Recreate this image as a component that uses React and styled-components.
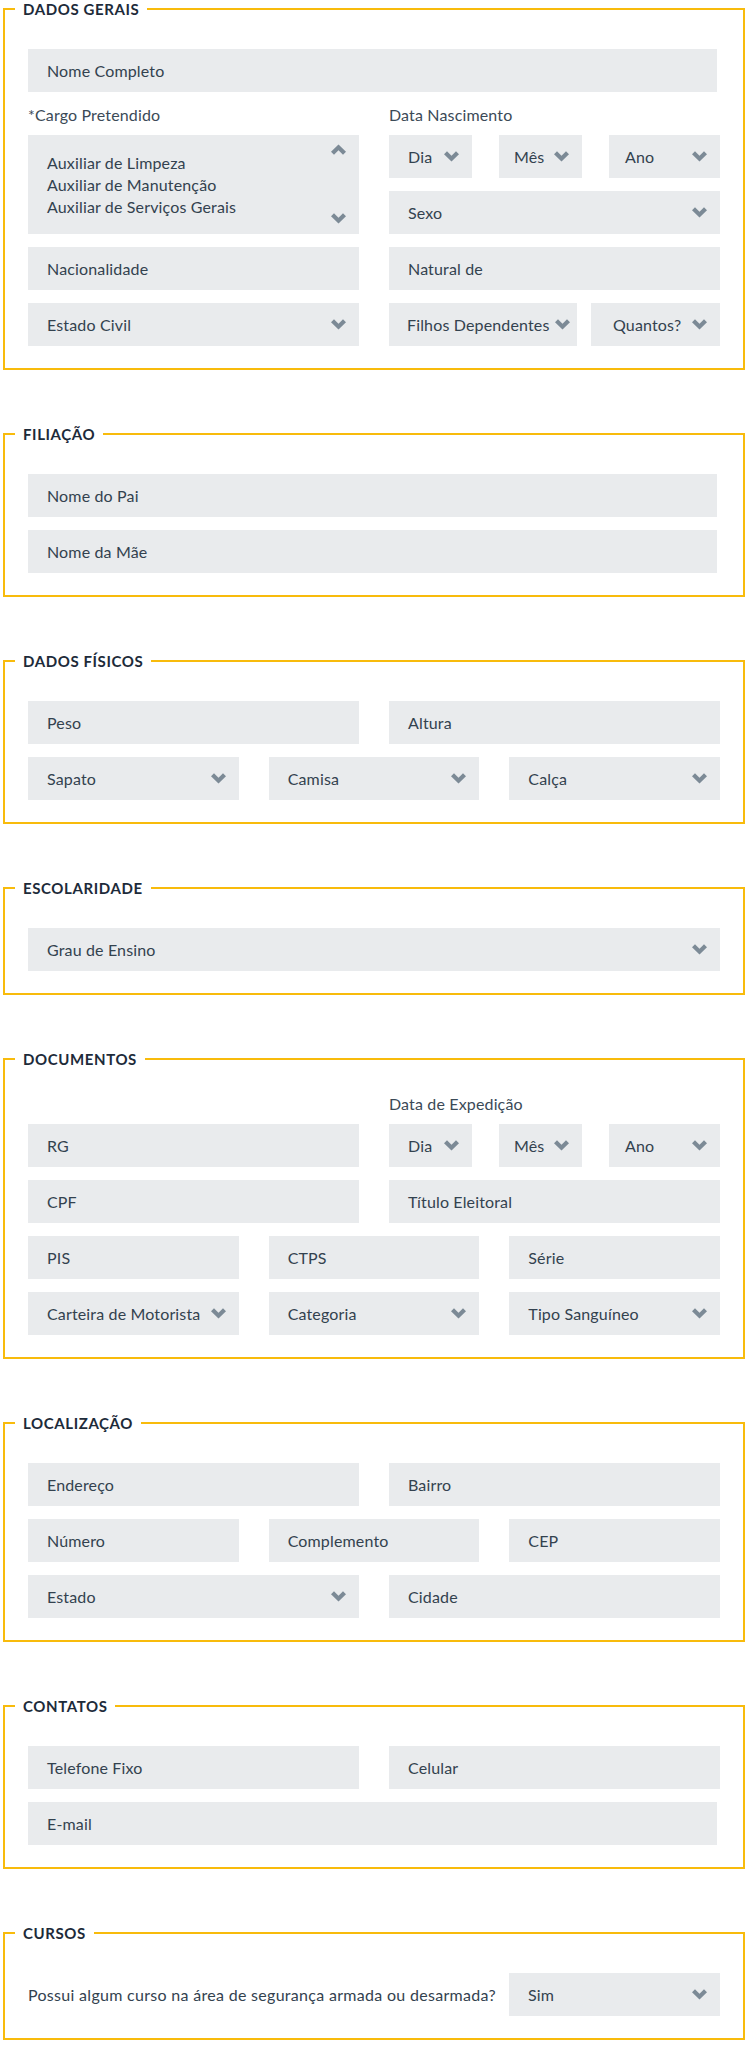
import styled, { createGlobalStyle } from 'styled-components';

const GlobalStyle = createGlobalStyle`
  body {
    margin: 0;
    background: #ffffff;
    font-family: Lato, "Open Sans", sans-serif;
    color: #33424f;
  }
  * {
    box-sizing: border-box;
  }
`;

const Page = styled.div`
  padding: 0 10px 0 3px;
`;

const Section = styled.fieldset`
  margin: 0 0 55px;
  padding: 31px 23px 22px 23px;
  border: 2px solid #f8bb0c;
  min-width: 0;
  display: flex;
  flex-direction: column;
  gap: 13px;

  &:last-child {
    margin-bottom: 0;
  }
`;

const Legend = styled.legend`
  margin-left: -13px;
  padding: 0 8px;
  font-size: 15px;
  line-height: 18px;
  font-weight: 700;
  letter-spacing: 0.6px;
  color: #1d2b3a;
  text-transform: uppercase;
`;

const Grid = styled.div`
  display: grid;
  grid-template-columns: ${(p) => (p.$cols === 3 ? 'repeat(3, 1fr)' : '1fr 1fr')};
  column-gap: 30px;
  row-gap: 13px;
  margin-top: ${(p) => p.$raise || 0}px;
`;

const Label = styled.div`
  font-size: 16px;
  line-height: 20px;
  letter-spacing: 0.15px;
  margin-bottom: -3px;
  color: #3b4a57;
`;

const Box = styled.div`
  height: 43px;
  background: #e9ebed;
  display: flex;
  align-items: center;
  justify-content: space-between;
  gap: 5px;
  padding: 0 ${(p) => p.$right || 13}px 0 ${(p) => p.$inset || 19}px;
  font-size: 16px;
  letter-spacing: 0.15px;
  color: #33424f;
  white-space: nowrap;
  grid-column: ${(p) => (p.$wide ? '1 / -1' : 'auto')};
  margin-right: ${(p) => p.$short || 0}px;
`;

const ListBox = styled.div`
  grid-row: span 2;
  background: #e9ebed;
  display: flex;
  justify-content: space-between;
  padding: 0 13px 0 19px;
`;

const Options = styled.div`
  display: flex;
  flex-direction: column;
  padding-top: 17px;
  font-size: 16px;
  letter-spacing: 0.15px;
  line-height: 22px;
  color: #33424f;
`;

const ScrollArrows = styled.div`
  display: flex;
  flex-direction: column;
  justify-content: space-between;
  padding: 9px 0 10px;
`;

const DateRow = styled.div`
  display: grid;
  grid-template-columns: 83px 83px 111px;
  justify-content: space-between;
`;

const PairRow = styled.div`
  display: grid;
  grid-template-columns: 188px 1fr;
  gap: 14px;
`;

const QuestionRow = styled.div`
  display: grid;
  grid-template-columns: minmax(0, 1fr) 211px;
  align-items: center;
  column-gap: 30px;
`;

const Question = styled.div`
  font-size: 16px;
  letter-spacing: 0.3px;
  color: #33424f;
  white-space: nowrap;
`;

const Spacer = styled.div``;

const Chevron = ({ up }) => (
  <svg
    width="15"
    height="11"
    viewBox="0 0 15 11"
    style={{ flexShrink: 0, transform: up ? 'rotate(180deg)' : undefined }}
  >
    <path d="M0 3.2 L3 0.3 L7.5 4.8 L12 0.3 L15 3.2 L7.5 10.6 Z" fill="#7c8a96" />
  </svg>
);

const Field = ({ children, ...rest }) => <Box {...rest}>{children}</Box>;

const Select = ({ children, ...rest }) => (
  <Box {...rest}>
    <span>{children}</span>
    <Chevron />
  </Box>
);

const DateSelects = () => (
  <DateRow>
    <Select>Dia</Select>
    <Select $inset={15}>Mês</Select>
    <Select $inset={16}>Ano</Select>
  </DateRow>
);

const App = () => (
  <>
    <GlobalStyle />
    <Page>
      <Section>
        <Legend>Dados Gerais</Legend>
        <Grid>
          <Field $wide $short={3}>Nome Completo</Field>
          <Label>*Cargo Pretendido</Label>
          <Label>Data Nascimento</Label>
          <ListBox>
            <Options>
              <span>Auxiliar de Limpeza</span>
              <span>Auxiliar de Manutenção</span>
              <span>Auxiliar de Serviços Gerais</span>
            </Options>
            <ScrollArrows>
              <Chevron up />
              <Chevron />
            </ScrollArrows>
          </ListBox>
          <DateSelects />
          <Select>Sexo</Select>
          <Field>Nacionalidade</Field>
          <Field>Natural de</Field>
          <Select>Estado Civil</Select>
          <PairRow>
            <Select $inset={18} $right={7}>Filhos Dependentes</Select>
            <Select $inset={22}>Quantos?</Select>
          </PairRow>
        </Grid>
      </Section>

      <Section>
        <Legend>Filiação</Legend>
        <Field $short={3}>Nome do Pai</Field>
        <Field $short={3}>Nome da Mãe</Field>
      </Section>

      <Section>
        <Legend>Dados Físicos</Legend>
        <Grid>
          <Field>Peso</Field>
          <Field>Altura</Field>
        </Grid>
        <Grid $cols={3}>
          <Select>Sapato</Select>
          <Select>Camisa</Select>
          <Select>Calça</Select>
        </Grid>
      </Section>

      <Section>
        <Legend>Escolaridade</Legend>
        <Select>Grau de Ensino</Select>
      </Section>

      <Section>
        <Legend>Documentos</Legend>
        <Grid $raise={-5}>
          <Spacer />
          <Label>Data de Expedição</Label>
          <Field>RG</Field>
          <DateSelects />
          <Field>CPF</Field>
          <Field>Título Eleitoral</Field>
        </Grid>
        <Grid $cols={3}>
          <Field>PIS</Field>
          <Field>CTPS</Field>
          <Field>Série</Field>
          <Select>Carteira de Motorista</Select>
          <Select>Categoria</Select>
          <Select>Tipo Sanguíneo</Select>
        </Grid>
      </Section>

      <Section>
        <Legend>Localização</Legend>
        <Grid>
          <Field>Endereço</Field>
          <Field>Bairro</Field>
        </Grid>
        <Grid $cols={3}>
          <Field>Número</Field>
          <Field>Complemento</Field>
          <Field>CEP</Field>
        </Grid>
        <Grid>
          <Select>Estado</Select>
          <Field>Cidade</Field>
        </Grid>
      </Section>

      <Section>
        <Legend>Contatos</Legend>
        <Grid>
          <Field>Telefone Fixo</Field>
          <Field>Celular</Field>
        </Grid>
        <Field $short={3}>E-mail</Field>
      </Section>

      <Section>
        <Legend>Cursos</Legend>
        <QuestionRow>
          <Question>Possui algum curso na área de segurança armada ou desarmada?</Question>
          <Select>Sim</Select>
        </QuestionRow>
      </Section>
    </Page>
  </>
);

export default App;
